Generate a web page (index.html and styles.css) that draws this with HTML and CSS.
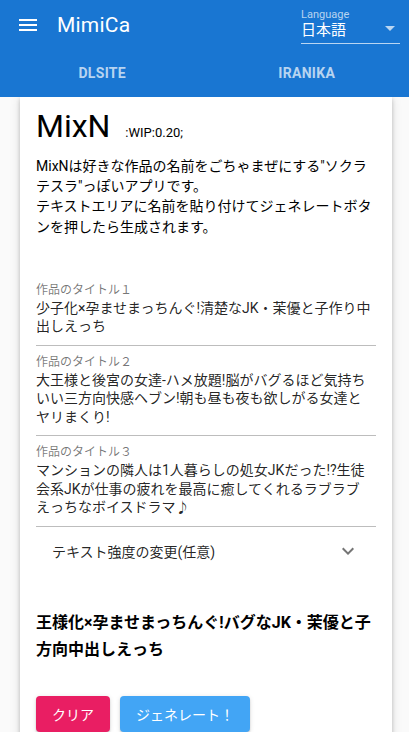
FILE: index.html
```html
<!DOCTYPE html>
<html lang="ja">
<head>
  <meta charset="UTF-8" />
  <meta name="viewport" content="width=device-width, initial-scale=1" />
  <title>MimiCa - MixN</title>
  <link rel="stylesheet" href="styles.css">
</head>
<body>
  <header class="app-bar">
    <div class="toolbar">
      <button class="nav-icon" aria-label="menu">
        <svg viewBox="0 0 24 24" width="24" height="24"><path d="M3 18h18v-2H3v2zm0-5h18v-2H3v2zm0-7v2h18V6H3z" fill="#fff"/></svg>
      </button>
      <div class="app-title">MimiCa</div>
      <div class="spacer"></div>
      <div class="lang-select">
        <div class="lang-field">
          <span class="lang-label">Language</span>
          <span class="lang-value">日本語</span>
        </div>
        <svg class="lang-arrow" viewBox="0 0 24 24" width="24" height="24"><path d="M7 10l5 5 5-5z" fill="currentColor"/></svg>
      </div>
    </div>
    <nav class="tabs">
      <a class="tab" href="#">DLSITE</a>
      <a class="tab" href="#">IRANIKA</a>
    </nav>
  </header>

  <main class="container">
    <div class="card">
      <h1 class="title">MixN <small>:WIP:0.20;</small></h1>
      <p class="desc">MixNは好きな作品の名前をごちゃまぜにする"ソクラテスラ"っぽいアプリです。<br>テキストエリアに名前を貼り付けてジェネレートボタンを押したら生成されます。</p>

      <div class="fields">
        <div class="field">
          <label>作品のタイトル１</label>
          <div class="field-value">少子化×孕ませまっちんぐ!清楚なJK・茉優と子作り中出しえっち</div>
        </div>
        <div class="field">
          <label>作品のタイトル２</label>
          <div class="field-value">大王様と後宮の女達-ハメ放題!脳がバグるほど気持ちいい三方向快感ヘブン!朝も昼も夜も欲しがる女達とヤリまくり!</div>
        </div>
        <div class="field">
          <label>作品のタイトル３</label>
          <div class="field-value">マンションの隣人は1人暮らしの処女JKだった!?生徒会系JKが仕事の疲れを最高に癒してくれるラブラブえっちなボイスドラマ♪</div>
        </div>
      </div>

      <div class="panel-header">
        <span>テキスト強度の変更(任意)</span>
        <svg viewBox="0 0 24 24" width="24" height="24"><path d="M7.41 8.59L12 13.17l4.59-4.58L18 10l-6 6-6-6 1.41-1.41z" fill="#757575"/></svg>
      </div>

      <p class="result">王様化×孕ませまっちんぐ!バグなJK・茉優と子方向中出しえっち</p>

      <div class="actions">
        <button class="btn btn-clear">クリア</button>
        <button class="btn btn-generate">ジェネレート！</button>
      </div>
    </div>
  </main>
</body>
</html>
```

FILE: styles.css
```css
* {
  box-sizing: border-box;
}
body {
  margin: 0;
  font-family: Roboto, "Noto Sans CJK JP", sans-serif;
  color: rgba(0, 0, 0, 0.87);
  background-color: #fafafa;
  overflow: hidden;
}

/* app bar */
.app-bar {
  position: relative;
  z-index: 2;
  background-color: #1976d2;
  color: #fff;
}
.toolbar {
  height: 49px;
  display: flex;
  align-items: center;
  padding: 0 9px 0 16px;
}
.nav-icon {
  background: none;
  border: none;
  padding: 0;
  width: 24px;
  height: 24px;
  cursor: pointer;
}
.nav-icon svg {
  display: block;
}
.app-title {
  margin-left: 17px;
  font-size: 21px;
  letter-spacing: 0.2px;
}
.spacer {
  flex-grow: 1;
}
.lang-select {
  width: 99px;
  height: 35px;
  margin-top: 4px;
  display: flex;
  align-items: flex-start;
  border-bottom: 1px solid rgba(255, 255, 255, 0.7);
}
.lang-field {
  flex-grow: 1;
  display: flex;
  flex-direction: column;
}
.lang-label {
  font-size: 11px;
  line-height: 12px;
  color: rgba(255, 255, 255, 0.7);
}
.lang-value {
  font-size: 15px;
  line-height: 19px;
}
.lang-arrow {
  color: rgba(255, 255, 255, 0.7);
  margin-top: 7px;
  margin-right: -2px;
}
.tabs {
  height: 48px;
  display: flex;
}
.tab {
  flex: 1;
  display: flex;
  align-items: center;
  justify-content: center;
  color: rgba(255, 255, 255, 0.7);
  text-decoration: none;
  font-size: 14px;
  font-weight: 700;
  letter-spacing: 0.3px;
}

/* main card */
.container {
  padding: 0 17px 0 20px;
}
.card {
  background-color: #fff;
  padding: 8.8px 16px 40px;
  box-shadow: 0 2px 4px rgba(0, 0, 0, 0.2), 0 1px 10px rgba(0, 0, 0, 0.12);
}
.title {
  margin: 0;
  font-size: 32px;
  font-weight: 400;
  line-height: 40px;
  color: #000;
}
.title small {
  font-size: 13px;
  line-height: 1;
  margin-left: 7px;
}
.desc {
  margin: 10px 0 0;
  font-size: 14px;
  line-height: 20.3px;
  color: #000;
}
.fields {
  margin-top: 36.7px;
}
.field {
  padding: 8px 0 9px;
  border-bottom: 1px solid #bdbdbd;
}
.field label {
  display: block;
  font-size: 12px;
  line-height: 16px;
  color: rgba(0, 0, 0, 0.54);
}
.field-value {
  width: 337.5px;
  margin-top: 1px;
  font-size: 14px;
  line-height: 18.5px;
}
.panel-header {
  height: 48px;
  display: flex;
  align-items: center;
  justify-content: space-between;
  padding: 0 16px;
  font-size: 14px;
}
.panel-header svg {
  display: block;
}
.result {
  margin: 35.6px 0 0;
  font-size: 16px;
  font-weight: 700;
  line-height: 26.7px;
  color: #000;
}
.actions {
  margin-top: 32.2px;
  display: flex;
  gap: 10px;
}
.btn {
  height: 36px;
  border: none;
  border-radius: 4px;
  padding: 0;
  font-family: inherit;
  font-size: 14px;
  white-space: nowrap;
  color: #fff;
  cursor: pointer;
  box-shadow: 0 2px 2px rgba(0, 0, 0, 0.14), 0 1px 5px rgba(0, 0, 0, 0.12);
}
.btn-clear {
  width: 74px;
  background-color: #e91e63;
}
.btn-generate {
  width: 130px;
  background-color: #42a5f5;
}
```
